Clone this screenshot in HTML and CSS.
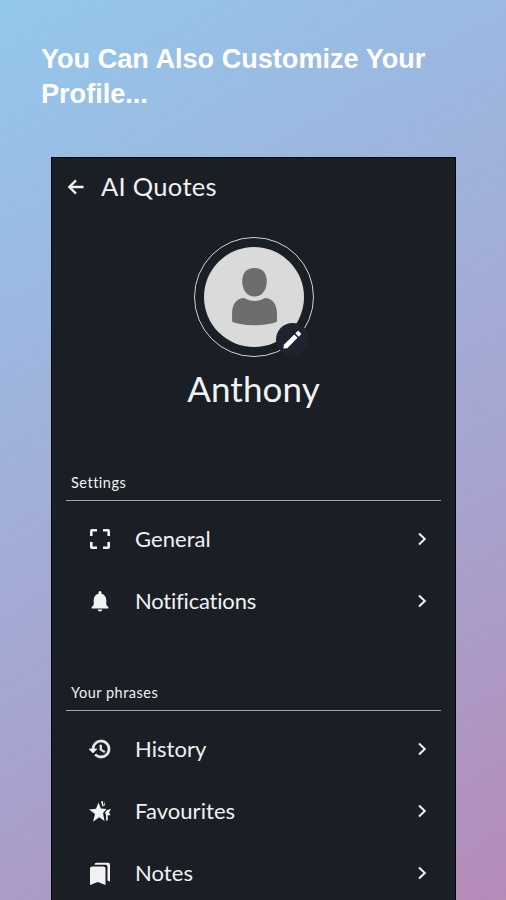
FILE: index.html
```
<!DOCTYPE html>
<html lang="en">
<head>
    <meta charset="UTF-8">
    <meta name="viewport" content="width=device-width, initial-scale=1.0">
    <title>AI Quotes - Profile</title>
    <link rel="stylesheet" href="styles.css">
</head>
<body>
    <h1 class="headline">You Can Also Customize Your Profile...</h1>

    <main class="phone">
        <header class="app-bar">
            <svg class="back-icon" viewBox="0 0 24 24"><path d="M21 12H4M12 4l-8 8 8 8"/></svg>
            <span class="app-title">AI Quotes</span>
        </header>

        <section class="profile">
            <div class="avatar">
                <svg class="avatar-picture" viewBox="0 0 98 98">
                    <circle cx="49" cy="49" r="49" fill="#dadada"/>
                    <path d="M49.500 20.500c8 0 12 5 12 13 0 9-5 15-12 15s-12-6-12-15c0-8 4-13 12-13z" fill="#6d6d6d"/>
                    <path d="M39.500 50c6 4 14 4 20 0 8 0 12 7 12 15v8c-10 5-34 5-44 0v-8c0-8 4-15 12-15z" fill="#6d6d6d"/>
                </svg>
                <div class="edit-badge">
                    <svg viewBox="0 0 24 24"><path d="M3 17.500L2.500 21.500l4-.5L17.300 10.200l-3.500-3.500zM18.500 9l2.200-2.200a1 1 0 0 0 0-1.400l-2.100-2.100a1 1 0 0 0-1.400 0L15 5.500z"/></svg>
                </div>
            </div>
            <h2 class="profile-name">Anthony</h2>
        </section>

        <section class="menu">
            <h3 class="menu-title">Settings</h3>
            <ul class="menu-list">
                <li class="menu-item">
                    <svg class="menu-icon" viewBox="0 0 24 24"><path d="M2 9V4a2 2 0 0 1 2-2h5v2.600H4.600V9zM15 2h5a2 2 0 0 1 2 2v5h-2.600V4.600H15zM2 15h2.600v4.400H9V22H4a2 2 0 0 1-2-2zM19.400 15H22v5a2 2 0 0 1-2 2h-5v-2.600h4.400z"/></svg>
                    <span class="menu-label">General</span>
                    <svg class="chevron" viewBox="0 0 12 16"><path d="M3 2.5L8.8 8 3 13.5"/></svg>
                </li>
                <li class="menu-item">
                    <svg class="menu-icon" viewBox="0 0 24 24"><path d="M12 22.500c1.300 0 2.300-.9 2.300-2H9.700c0 1.100 1 2 2.300 2zm6.300-6.500v-5c0-3.070-1.800-5.640-4.800-6.320V3.500a1.500 1.500 0 0 0-3 0v1.180C7.500 5.360 5.700 7.920 5.700 11v5l-2 2v1.500h16.600V18l-2-2z"/></svg>
                    <span class="menu-label tight">Notifications</span>
                    <svg class="chevron" viewBox="0 0 12 16"><path d="M3 2.5L8.8 8 3 13.5"/></svg>
                </li>
            </ul>
        </section>

        <section class="menu">
            <h3 class="menu-title">Your phrases</h3>
            <ul class="menu-list">
                <li class="menu-item">
                    <svg class="menu-icon" viewBox="0 0 24 24"><path d="M13 3a9 9 0 0 0-9 9H1l3.890 3.890.07.14L9 12H6a7 7 0 1 1 2.060 4.940l-1.420 1.420A9 9 0 1 0 13 3zm-1 5v5l4.280 2.540.72-1.210-3.500-2.080V8H12z" stroke="#f1f1f1" stroke-width=".7"/></svg>
                    <span class="menu-label">History</span>
                    <svg class="chevron" viewBox="0 0 12 16"><path d="M3 2.5L8.8 8 3 13.5"/></svg>
                </li>
                <li class="menu-item">
                    <svg class="menu-icon" viewBox="0 0 24 24"><path d="M10.500 3.500l2.400 6 5.600.6-3.500 3.800 1.500 8-5.300-3.700-6.200 4.500 2-7.700L1 10.400l7-.7zM13 2.500l1.800-.5 1 5.300h-1.500zM16 2.500l1 3.500-1 1zM17 14c1.500-3 3-3.500 6-4l-2 3.500 1.500 2.500-1.500.5-1.300-.5v5.500h-1.700v-6z"/></svg>
                    <span class="menu-label">Favourites</span>
                    <svg class="chevron" viewBox="0 0 12 16"><path d="M3 2.5L8.8 8 3 13.5"/></svg>
                </li>
                <li class="menu-item">
                    <svg class="menu-icon" viewBox="0 0 24 24"><path d="M4 5.500h11.500a2 2 0 0 1 2 2V24l-7.700-3L2 24V7.500a2 2 0 0 1 2-2z"/><path d="M6.500 3.800c0-1.200.8-2 2-2H20a2 2 0 0 1 2 2V20.500l-2.500-1V5.800a2 2 0 0 0-2-2z"/></svg>
                    <span class="menu-label">Notes</span>
                    <svg class="chevron" viewBox="0 0 12 16"><path d="M3 2.5L8.8 8 3 13.5"/></svg>
                </li>
            </ul>
        </section>
    </main>
</body>
</html>
```
FILE: styles.css
```
* {
    margin: 0;
    padding: 0;
    box-sizing: border-box;
}

body {
    height: 900px;
    overflow: hidden;
    display: flex;
    flex-direction: column;
    background: linear-gradient(150deg, #93c8eb 0%, #9db6df 30%, #a6a4d0 62%, #b58bb8 100%);
    font-family: Lato, 'Noto Sans', sans-serif;
    color: #f1f1f1;
}

.headline {
    height: 157px;
    flex-shrink: 0;
    padding: 41px 60px 0 41px;
    font-family: 'Liberation Sans', Arial, sans-serif;
    font-size: 27.1px;
    line-height: 35px;
    color: #fff;
}

.phone {
    width: 405px;
    height: 760px;
    flex-shrink: 0;
    margin-left: 51px;
    background: #1a1f25;
    border: 1px solid #050608;
    border-bottom: none;
    padding: 1px;
}

.app-bar {
    display: flex;
    align-items: center;
    height: 56px;
    padding-left: 13px;
}

.back-icon {
    width: 20px;
    height: 20px;
    fill: none;
    stroke: #f1f1f1;
    stroke-width: 2.8;
}

.app-title {
    margin-left: 15px;
    padding-bottom: 2px;
    font-size: 25.5px;
    letter-spacing: 0.3px;
}

.profile {
    height: 256px;
    padding-top: 22px;
    display: flex;
    flex-direction: column;
    align-items: center;
}

.avatar {
    position: relative;
    width: 120px;
    height: 120px;
    padding: 9px;
    border: 1.5px solid #d2d3d4;
    border-radius: 50%;
}

.avatar-picture {
    display: block;
    width: 100px;
    height: 100px;
}

.edit-badge {
    position: absolute;
    right: 4px;
    bottom: 0;
    width: 33px;
    height: 33px;
    border-radius: 50%;
    background: #1f2330;
    display: flex;
    align-items: center;
    justify-content: center;
}

.edit-badge svg {
    width: 23px;
    height: 23px;
    fill: #fff;
}

.profile-name {
    margin-top: 9px;
    font-size: 35px;
    font-weight: 400;
    line-height: 44px;
    letter-spacing: 0.1px;
}

.menu {
    height: 210px;
    padding: 0 13px;
}

.menu-title {
    height: 30px;
    padding-left: 5px;
    border-bottom: 1px solid #a3a5a8;
    font-size: 14.5px;
    font-weight: 400;
    line-height: 24px;
    letter-spacing: 0.5px;
}

.menu-list {
    padding-top: 7px;
    list-style: none;
}

.menu-item {
    display: flex;
    align-items: center;
    height: 62px;
    padding: 0 13px 0 22px;
}

.menu-icon {
    width: 24px;
    height: 24px;
    fill: #f1f1f1;
}

.menu-label {
    flex: 1;
    margin-left: 23px;
    padding-bottom: 2px;
    font-size: 22px;
    letter-spacing: 0.05px;
}

.menu-label.tight {
    letter-spacing: -0.2px;
}

.chevron {
    width: 12px;
    height: 16px;
    fill: none;
    stroke: #f1f1f1;
    stroke-width: 2;
}
```
